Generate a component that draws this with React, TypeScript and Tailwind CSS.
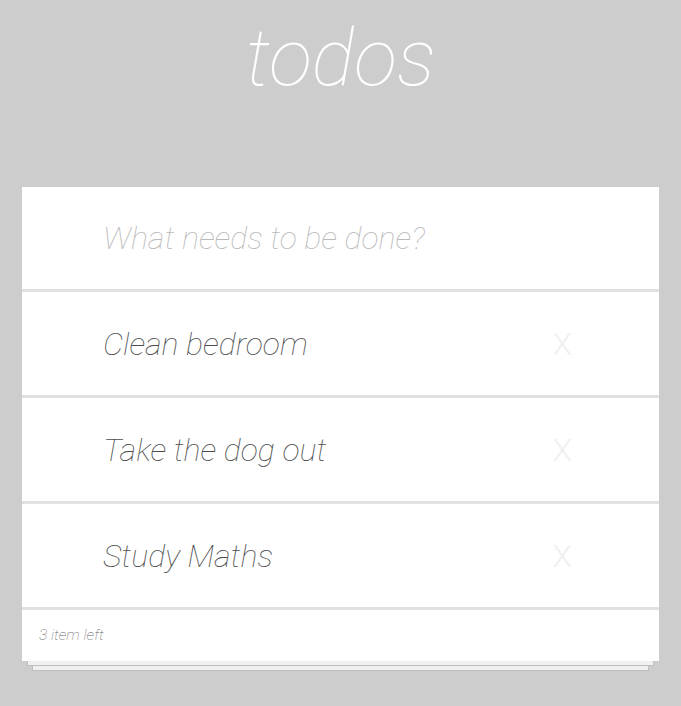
import React from "react";

const todos = ["Clean bedroom", "Take the dog out", "Study Maths"];

export default function App() {
  return (
    <div className="min-h-[706px] w-full bg-[#cdcdcd] font-['Roboto',sans-serif]">
      <h1 className="pt-[8px] text-center text-[80px] italic font-thin leading-[100px] text-white">todos</h1>

      <div className="mx-[22px] mt-[79px]">
        <div className="bg-white">
          <div className="h-[105px] border-b-[3px] border-[#e1e1e1] pl-[81px] flex items-center">
            <span className="text-[32px] italic font-thin text-[#b9b9b9]">What needs to be done?</span>
          </div>
          {todos.map((t) => (
            <div key={t} className="h-[106px] border-b-[3px] border-[#e1e1e1] pl-[81px] pr-[87px] flex items-center justify-between">
              <span className="text-[32px] italic font-thin text-[#4d4d4d]">{t}</span>
              <span className="text-[32px] font-light text-[#f0f0f0]">X</span>
            </div>
          ))}
          <div className="h-[51px] pl-[17px] flex items-center">
            <span className="text-[15.5px] italic font-thin text-[#666666]">3 item left</span>
          </div>
        </div>
        <div className="mx-[5px] h-[5px] bg-[#f0f0f0] border-b border-x border-[#bfbfbf]" />
        <div className="mx-[10px] h-[5px] bg-[#f0f0f0] border-b border-x border-[#bfbfbf]" />
      </div>
    </div>
  );
}
